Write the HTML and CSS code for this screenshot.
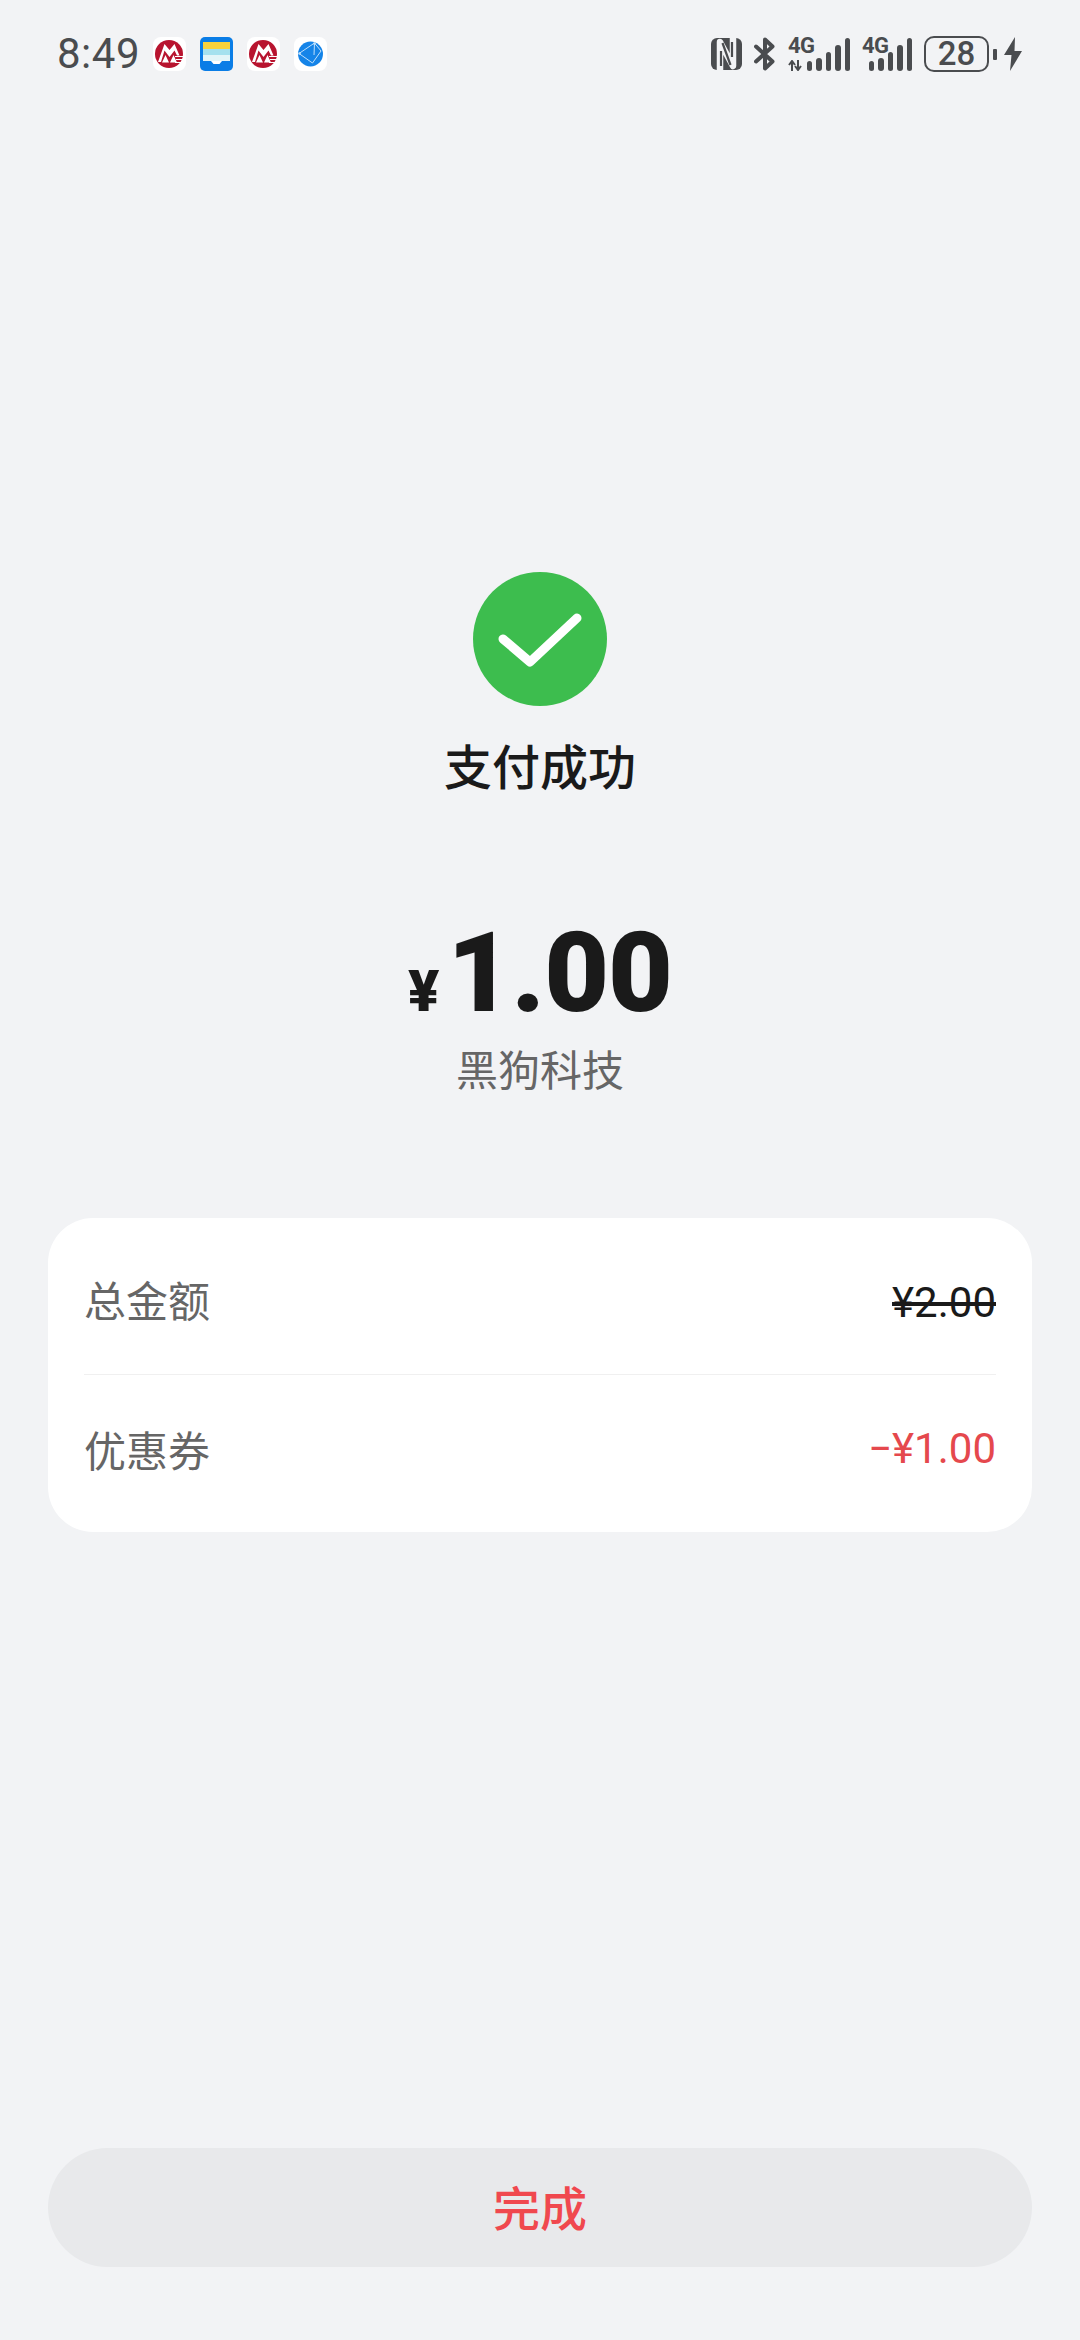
FILE: index.html
```html
<!DOCTYPE html>
<html>
<head>
  <title>支付成功</title>
  <link rel="stylesheet" href="styles.css">
</head>
<body>

  <div class="page">

    <div class="status-bar">
      <div class="status-left">
        <span class="clock">8:49</span>
        <svg class="app-icon" viewBox="0 0 33 34">
          <rect width="33" height="34" rx="8" fill="#fff"/>
          <circle cx="16" cy="17" r="14" fill="#b8142f"/>
          <path d="M5 25 L11.5 7 L16.5 13 L21.5 7 L26.5 18.5 H24 L21.5 13.5 L16.5 20 L11.5 13.5 L8 25 Z" fill="#fff"/>
          <path d="M9 25.5 L12.5 18 L16 25.5 Z M17 25.5 L20.5 18 L24 25.5 Z" fill="#fff"/>
          <path d="M22 19.5 H32 M23 22.5 H32 M22 25.5 H29" stroke="#fff" stroke-width="1.2"/>
        </svg>
        <svg class="app-icon app-icon-wide" viewBox="0 0 33 34">
          <rect width="33" height="34" rx="5" fill="#0a7de6"/>
          <rect x="3" y="5" width="27" height="7" fill="#f9d23c"/>
          <rect x="3" y="12" width="27" height="6" fill="#a5e1ee"/>
          <rect x="3" y="18" width="27" height="6" fill="#e3f5f8"/>
          <path d="M11 24 H22 L19.5 27 H13.5 Z" fill="#fff"/>
        </svg>
        <svg class="app-icon app-icon-wide" viewBox="0 0 33 34">
          <rect width="33" height="34" rx="8" fill="#fff"/>
          <circle cx="16" cy="17" r="14" fill="#b8142f"/>
          <path d="M5 25 L11.5 7 L16.5 13 L21.5 7 L26.5 18.5 H24 L21.5 13.5 L16.5 20 L11.5 13.5 L8 25 Z" fill="#fff"/>
          <path d="M9 25.5 L12.5 18 L16 25.5 Z M17 25.5 L20.5 18 L24 25.5 Z" fill="#fff"/>
          <path d="M22 19.5 H32 M23 22.5 H32 M22 25.5 H29" stroke="#fff" stroke-width="1.2"/>
        </svg>
        <svg class="app-icon app-icon-wide" viewBox="0 0 33 34">
          <rect width="33" height="34" rx="8" fill="#fff"/>
          <circle cx="16.5" cy="17" r="12.5" fill="#1584e8"/>
          <path d="M5 16.5 L20.5 6 L27 14 L18.5 26 Z M20.5 6 L20 18" stroke="#bfe0fb" stroke-width="1" fill="none"/>
          <circle cx="5.5" cy="16.5" r="1.3" fill="#bfe0fb"/>
          <circle cx="20.5" cy="6.5" r="1.3" fill="#bfe0fb"/>
        </svg>
      </div>

      <div class="status-right">
        <svg class="nfc" viewBox="0 0 31 32">
          <rect width="31" height="32" rx="6" fill="#4a4c4f"/>
          <path d="M9 32 V4 L22 28 V0" stroke="#f2f3f5" stroke-width="6.5" fill="none" stroke-linejoin="round"/>
          <path d="M10 13 L10 28 M21 4 L21 19 M11.5 5 L19.5 27" stroke="#4a4c4f" stroke-width="2.2" fill="none"/>
        </svg>
        <svg class="bt" viewBox="0 0 22 34">
          <path d="M2 9.5 L18.5 24.5 L11 31.5 V2.5 L18.5 9.5 L2 24.5" stroke="#4a4c4f" stroke-width="4" fill="none" stroke-linecap="round" stroke-linejoin="round"/>
        </svg>
        <div class="signal signal-first">
          <span class="net">4G</span>
          <svg class="updown" viewBox="0 0 14 11">
            <path d="M4 11 V2 M1 5 L4 1 L7 5 M10 0 V9 M7 6 L10 10 L13 6" stroke="#4a4c4f" stroke-width="2" fill="none"/>
          </svg>
          <span class="bars">
            <i class="b1"></i><i class="b2"></i><i class="b3"></i><i class="b4"></i><i class="b5"></i>
          </span>
        </div>
        <div class="signal signal-second">
          <span class="net">4G</span>
          <span class="bars">
            <i class="b1"></i><i class="b2"></i><i class="b3"></i><i class="b4"></i><i class="b5"></i>
          </span>
        </div>
        <div class="battery">28</div>
        <div class="battery-nub"></div>
        <svg class="bolt" viewBox="0 0 18 34">
          <path d="M11 0 L0 18 H7.5 L6 34 L18 14 H10.5 Z" fill="#4a4c4f"/>
        </svg>
      </div>
    </div>

    <div class="result">
      <svg class="check" viewBox="0 0 134 134">
        <circle cx="67" cy="67" r="67" fill="#3dbd4e"/>
        <path d="M30 67 L57 90 L104 46" stroke="#fff" stroke-width="9" fill="none" stroke-linecap="round" stroke-linejoin="round"/>
      </svg>
      <div class="result-title">支付成功</div>
      <div class="amount"><span class="amount-sign">¥</span><span class="amount-value">1.00</span></div>
      <div class="merchant">黑狗科技</div>
    </div>

    <div class="card">
      <div class="row row-first">
        <span class="row-label">总金额</span>
        <span class="row-value strike">¥2.00</span>
      </div>
      <div class="row row-second">
        <span class="row-label">优惠券</span>
        <span class="row-value discount">−¥1.00</span>
      </div>
    </div>

    <button class="done">完成</button>

  </div>

</body>
</html>
```

FILE: styles.css
```css
html, body {
  margin: 0;
  padding: 0;
}

body {
  font-family: Roboto, "Noto Sans CJK SC", sans-serif;
  background-color: #f2f3f5;
  color: #1a1a1a;
}

.page {
  display: flex;
  flex-direction: column;
  height: 2340px;
  padding: 0 48px 73px;
  box-sizing: border-box;
  overflow: hidden;
}

/* Status bar */
.status-bar {
  display: flex;
  justify-content: space-between;
  align-items: center;
  height: 34px;
  margin: 37px 10px 0 9px;
  color: #4a4c4f;
}

.status-left, .status-right {
  display: flex;
  align-items: center;
}

.clock {
  width: 96px;
  font-size: 42px;
  line-height: 34px;
  letter-spacing: 0.5px;
}

.app-icon {
  width: 33px;
  height: 34px;
}

.app-icon-wide {
  margin-left: 14px;
}

.nfc {
  width: 31px;
  height: 32px;
  margin-right: 12px;
}

.bt {
  width: 22px;
  height: 34px;
  margin-right: 12px;
}

.signal {
  position: relative;
  height: 34px;
}

.signal-first {
  width: 62px;
  margin-right: 12px;
}

.signal-second {
  width: 50px;
  margin-right: 12px;
}

.net {
  position: absolute;
  left: 0;
  top: -1px;
  font-size: 22px;
  font-weight: 700;
  line-height: 20px;
  letter-spacing: -0.5px;
}

.updown {
  position: absolute;
  left: 0;
  bottom: 0;
  width: 14px;
  height: 11px;
}

.bars {
  position: absolute;
  right: 0;
  bottom: 0;
  display: flex;
  align-items: flex-end;
  gap: 4px;
}

.bars i {
  display: block;
  width: 5.5px;
  border-radius: 3px;
  background-color: #4a4c4f;
}

.b1 { height: 10px; }
.b2 { height: 13px; }
.b3 { height: 19px; }
.b4 { height: 26px; }
.b5 { height: 33px; }

.battery {
  width: 65px;
  height: 36px;
  box-sizing: border-box;
  border: 2.5px solid #4a4c4f;
  border-radius: 10px;
  font-size: 33px;
  font-weight: 500;
  line-height: 31px;
  text-align: center;
}

.battery-nub {
  width: 4px;
  height: 11px;
  margin-left: 4px;
  margin-right: 7px;
  border-radius: 1px;
  background-color: #4a4c4f;
}

.bolt {
  width: 18px;
  height: 34px;
}

/* Result */
.result {
  display: flex;
  flex-direction: column;
  align-items: center;
  margin-top: 501px;
}

.check {
  width: 134px;
  height: 134px;
}

.result-title {
  margin-top: 33px;
  font-size: 48px;
  font-weight: 500;
  line-height: 60px;
}

.amount {
  display: flex;
  align-items: baseline;
  margin-top: 108px;
  line-height: 132px;
  font-weight: 900;
}

.amount-sign {
  font-size: 58px;
  margin-right: 8px;
}

.amount-value {
  font-size: 112px;
  letter-spacing: -1px;
}

.merchant {
  margin-top: -13px;
  font-size: 42px;
  line-height: 56px;
  color: #666;
}

/* Card */
.card {
  margin-top: 118px;
  padding: 0 36px;
  background-color: #fff;
  border-radius: 45px;
}

.row {
  display: flex;
  justify-content: space-between;
  align-items: center;
  height: 157px;
  box-sizing: border-box;
}

.row-first {
  padding-top: 12px;
  border-bottom: 1px solid #f0f0f0;
}

.row-first .row-label {
  margin-bottom: 8px;
}

.row-second {
  padding-bottom: 10px;
}

.row-label {
  font-size: 42px;
  color: #666;
}

.row-value {
  font-size: 42px;
}

.strike {
  text-decoration: line-through;
  color: #1a1a1a;
}

.discount {
  color: #e5484d;
}

/* Done button */
.done {
  margin-top: auto;
  height: 119px;
  padding: 0 0 4px;
  border: 0;
  border-radius: 60px;
  background-color: #e8e9eb;
  font-family: inherit;
  font-size: 47px;
  font-weight: 500;
  color: #f0484e;
}
```
